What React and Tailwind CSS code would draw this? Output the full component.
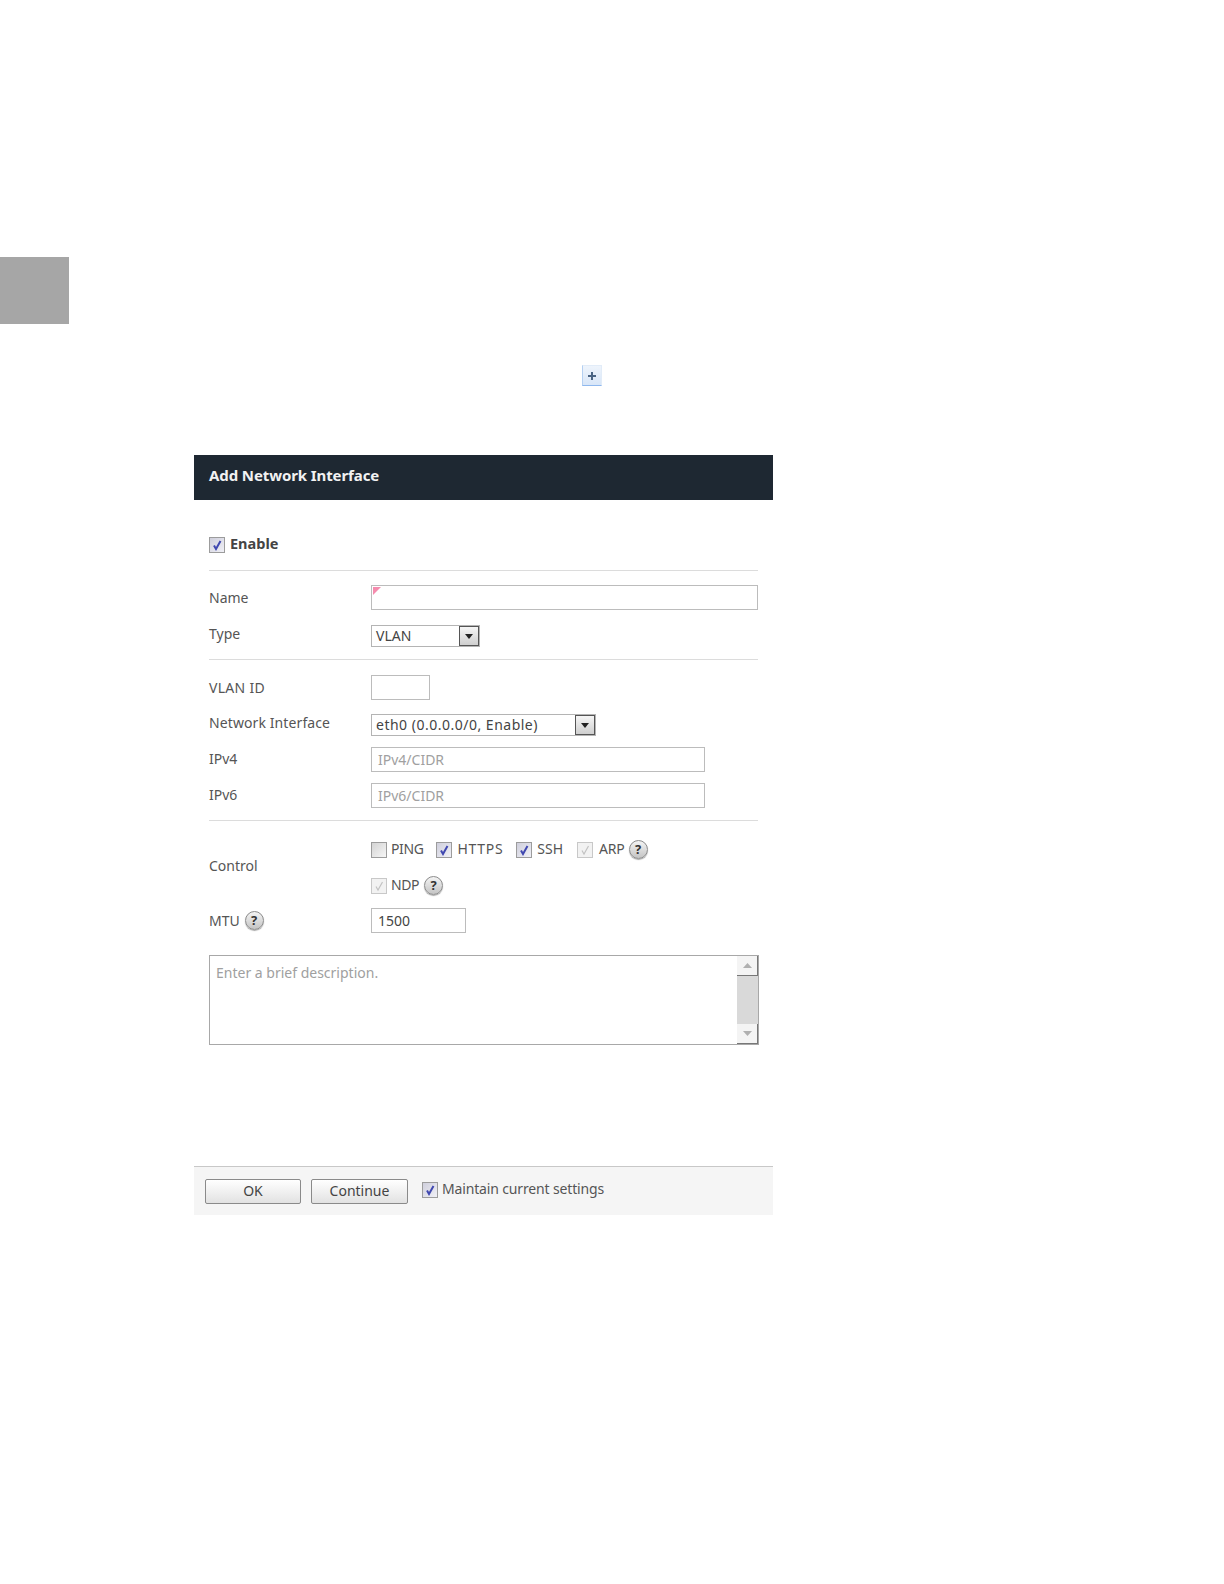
const font = "font-['Noto_Sans','DejaVu_Sans',sans-serif]";

function Check({ checked, disabled }) {
  return (
    <span
      className={`flex h-4 w-4 shrink-0 items-center justify-center border ${
        disabled
          ? "border-[#c8c8c8] bg-[#f2f2f2]"
          : checked
            ? "border-[#9c9c9c] bg-linear-to-br from-[#cfcfdc] to-[#f0f0f6]"
            : "border-[#9c9c9c] bg-linear-to-br from-[#d4d4d4] to-[#f6f6f6]"
      }`}
    >
      {checked && (
        <svg width="12" height="12" viewBox="0 0 12 12" fill="none">
          <path
            d="M3 6.5 L5 10 L9.5 2"
            stroke={disabled ? "#c2c2c2" : "#4048b0"}
            strokeWidth={disabled ? "1.2" : "2"}
          />
        </svg>
      )}
    </span>
  );
}

function Help() {
  return (
    <span className="flex h-[19px] w-[19px] items-center justify-center rounded-full border border-[#8c8c8c] bg-linear-to-b from-[#f4f4f4] to-[#c4c4c4] text-[13px] font-bold leading-none text-[#333] shadow-[0_1px_1px_#aaa]">
      ?
    </span>
  );
}

function CheckLabel({ label, checked, disabled, className = "", textClass = "" }) {
  return (
    <span className={`flex items-center gap-1 ${className}`}>
      <Check checked={checked} disabled={disabled} />
      <span className={`relative top-[-1px] text-[14px] leading-none text-[#555] ${textClass}`}>
        {label}
      </span>
    </span>
  );
}

function Select({ value, width, textClass = "" }) {
  return (
    <div
      className={`flex h-[22px] items-center justify-between border border-[#b4b4b4] bg-white pl-1 ${width}`}
    >
      <span className={`text-[14px] leading-none text-[#444] ${textClass}`}>{value}</span>
      <span className="flex h-[20px] w-[20px] items-center justify-center border border-[#555] bg-linear-to-b from-[#f6f6f6] to-[#cfcfcf]">
        <svg width="8" height="5" viewBox="0 0 8 5">
          <path d="M0 0 H8 L4 5 Z" fill="#222" />
        </svg>
      </span>
    </div>
  );
}

function Label({ children, className = "" }) {
  return (
    <span
      className={`relative w-[162px] shrink-0 text-[14px] leading-none text-[#555] ${className}`}
    >
      {children}
    </span>
  );
}

function Field({ placeholder, value, width }) {
  return (
    <div
      className={`flex h-[25px] items-center border border-[#bcbcbc] bg-white pl-[6px] text-[14px] leading-none ${width} ${
        value ? "text-[#444]" : "text-[#a0a0a0]"
      }`}
    >
      {value || placeholder}
    </div>
  );
}

export default function App() {
  return (
    <div className={`h-[1584px] w-[1224px] overflow-hidden bg-white pt-[257px] ${font}`}>
      <div className="h-[67px] w-[69px] bg-[#a6a6a6]" />

      {/* Add button */}
      <div className="ml-[582px] mt-[41px] flex h-[21px] w-[20px] items-center justify-center border border-[#e2ecf8] border-b-[#8fb8ee] border-l-[#b4d0f2] bg-linear-to-b from-[#eef4fc] to-[#d8e6f8]">
        <svg width="10" height="10" viewBox="0 0 10 10">
          <path d="M5 1 V9 M1 5 H9" stroke="#4a6484" strokeWidth="2" />
        </svg>
      </div>

      {/* Dialog */}
      <div className="ml-[194px] mt-[69px] w-[579px]">
        <div className="flex h-[45px] items-center bg-[#1e2832] pb-1 pl-[15px] text-[15px] font-bold leading-none tracking-[-0.1px] text-[#f2f2f2]">
          Add Network Interface
        </div>

        <div className="px-[15px]">
          <div className="mt-[37px] flex h-4 items-center gap-[5px]">
            <Check checked />
            <span className="relative top-[-2px] text-[14.5px] font-bold leading-none text-[#444]">
              Enable
            </span>
          </div>

          <div className="mt-[17px] h-px w-[549px] bg-[#dcdcdc]" />

          <div className="mt-[14px] flex items-center">
            <Label>Name</Label>
            <div className="relative h-[25px] w-[389px] border border-[#bcbcbc] bg-white">
              <span className="absolute left-[1px] top-[1px] h-0 w-0 border-r-[8px] border-t-[8px] border-r-transparent border-t-[#f58cae]" />
            </div>
          </div>

          <div className="mt-[15px] flex items-center">
            <Label className="top-[-2px]">Type</Label>
            <Select value="VLAN" width="w-[109px]" />
          </div>

          <div className="mt-[12px] h-px w-[549px] bg-[#dcdcdc]" />

          <div className="mt-[15px] flex items-center">
            <Label>
              <span className="tracking-[0.3px]">VLAN ID</span>
            </Label>
            <Field width="w-[59px]" />
          </div>

          <div className="mt-[14px] flex items-center">
            <Label className="top-[-2px] tracking-[0.1px]">Network Interface</Label>
            <Select
              value="eth0 (0.0.0.0/0, Enable)"
              width="w-[225px]"
              textClass="tracking-[0.5px]"
            />
          </div>

          <div className="mt-[11px] flex items-center">
            <Label className="top-[-1px]">IPv4</Label>
            <Field placeholder="IPv4/CIDR" width="w-[334px]" />
          </div>

          <div className="mt-[11px] flex items-center">
            <Label className="top-[-1px]">IPv6</Label>
            <Field placeholder="IPv6/CIDR" width="w-[334px]" />
          </div>

          <div className="mt-[12px] h-px w-[549px] bg-[#dcdcdc]" />

          <div className="flex items-center">
            <Label className="top-[8px]">Control</Label>
            <div className="mt-[19px]">
              <div className="flex h-[19px] items-center">
                <CheckLabel label="PING" textClass="tracking-[-0.4px]" className="mr-[13px]" />
                <CheckLabel label="HTTPS" checked textClass="left-[1px] tracking-[0.7px]" className="mr-[14px]" />
                <CheckLabel label="SSH" checked textClass="left-[1px]" className="mr-[15px]" />
                <CheckLabel label="ARP" checked disabled textClass="left-[2px] tracking-[-0.2px]" className="mr-[6px]" />
                <Help />
              </div>
              <div className="mt-[17px] flex h-[19px] items-center">
                <CheckLabel label="NDP" checked disabled textClass="tracking-[-0.4px]" className="mr-[5px]" />
                <Help />
              </div>
            </div>
          </div>

          <div className="mt-[13px] flex items-center">
            <div className="flex w-[162px] shrink-0 items-center gap-[5px]">
              <span className="text-[14px] leading-none text-[#555]">MTU</span>
              <Help />
            </div>
            <Field value="1500" width="w-[95px]" />
          </div>

          <div className="mt-[22px] flex h-[90px] w-[550px] justify-between border border-[#a8a8a8] bg-white">
            <span className="pl-[6px] pt-[10px] text-[14px] leading-none text-[#a0a0a0]">
              Enter a brief description.
            </span>
            <div className="flex w-[21px] flex-col">
              <div className="flex h-[20px] items-center justify-center border-b border-r border-[#777] bg-[#f4f4f4]">
                <svg width="9" height="5" viewBox="0 0 9 5">
                  <path d="M0 5 H9 L4.5 0 Z" fill="#b0b0b0" />
                </svg>
              </div>
              <div className="flex-1 bg-[#d9d9d9]" />
              <div className="flex h-[20px] items-center justify-center border-b border-r border-[#777] bg-[#f4f4f4]">
                <svg width="9" height="5" viewBox="0 0 9 5">
                  <path d="M0 0 H9 L4.5 5 Z" fill="#b0b0b0" />
                </svg>
              </div>
            </div>
          </div>
        </div>

        {/* Footer */}
        <div className="mt-[121px] flex h-[49px] items-center border-t border-[#c8c8c8] bg-[#f5f5f5] pl-[11px]">
          <button className="h-[25px] w-[96px] rounded-[2px] border border-[#8a8a8a] bg-linear-to-b from-white to-[#e2e2e2] text-[14px] leading-none text-[#444]">
            OK
          </button>
          <button className="ml-[10px] h-[25px] w-[97px] rounded-[2px] border border-[#8a8a8a] bg-linear-to-b from-white to-[#e2e2e2] text-[14px] leading-none text-[#444]">
            Continue
          </button>
          <CheckLabel
            label="Maintain current settings"
            checked
            textClass="tracking-[-0.15px]"
            className="mb-[2px] ml-[14px]"
          />
        </div>
      </div>
    </div>
  );
}
